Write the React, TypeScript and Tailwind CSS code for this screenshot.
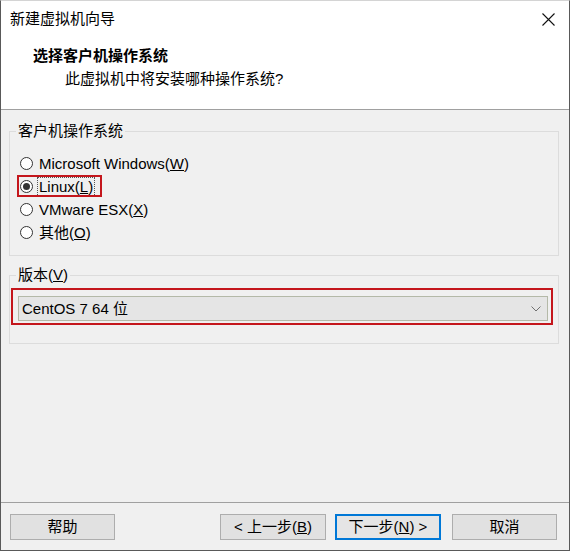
import React from "react";

function Radio({ checked, children, box }: { checked?: boolean; children: React.ReactNode; box?: boolean }) {
  return (
    <div className="relative flex h-[23px] items-center">
      <span className="flex h-[13px] w-[13px] items-center justify-center rounded-full border border-[#333333] bg-white">
        {checked && <span className="h-[7px] w-[7px] rounded-full bg-[#333333]" />}
      </span>
      <span className={"ml-[5px] px-[1px] leading-[18px] " + (box ? "outline outline-1 outline-dotted outline-[#555555]" : "")}>{children}</span>
      {box && <span className="pointer-events-none absolute left-[-3px] top-[0px] h-[22px] w-[85px] border-2 border-[#c4161c]" />}
    </div>
  );
}

function Btn({ children, def, w }: { children: React.ReactNode; def?: boolean; w: string }) {
  return (
    <div
      className={
        "flex h-[26px] items-center justify-center " +
        w +
        " " +
        (def ? "border-2 border-[#0078d7] bg-[#e5e5e5]" : "border border-[#adadad] bg-[#e1e1e1]")
      }
    >
      {children}
    </div>
  );
}

export default function App() {
  return (
    <div className="flex h-[551px] w-[570px] flex-col border-x border-b border-t border-x-[#595959] border-b-[#595959] border-t-[#d4d4d4] bg-[#f0f0f0] font-['Liberation_Sans','Noto_Sans_CJK_SC',sans-serif] text-[15px] leading-[20px] text-black">
      {/* title bar */}
      <div className="flex h-[36px] items-center justify-between bg-white pl-[9px] pr-[14px]">
        <span>新建虚拟机向导</span>
        <svg width="13" height="13" viewBox="0 0 13 13" className="mt-[1px]">
          <path d="M0.5 0.5 L12.5 12.5 M12.5 0.5 L0.5 12.5" stroke="#111" strokeWidth="1.1" fill="none" />
        </svg>
      </div>
      {/* header */}
      <div className="flex h-[72px] flex-col bg-white pl-[32px] pt-[9px]">
        <div className="font-bold">选择客户机操作系统</div>
        <div className="mt-[3px] pl-[32px]">此虚拟机中将安装哪种操作系统?</div>
      </div>
      <div className="h-px bg-[#a0a0a0]" />
      {/* body */}
      <div className="flex h-[392px] flex-col px-[8px]">
        <fieldset className="mt-[11px] h-[135px] w-[550px] border border-[#dcdcdc] p-0">
          <legend className="ml-[6px] px-[2px]">客户机操作系统</legend>
          <div className="mt-[11px] flex flex-col pl-[10px]">
            <Radio>
              Microsoft Windows(<u>W</u>)
            </Radio>
            <Radio checked box>
              Linux(<u>L</u>)
            </Radio>
            <Radio>
              VMware ESX(<u>X</u>)
            </Radio>
            <Radio>
              其他(<u>O</u>)
            </Radio>
          </div>
        </fieldset>
        <fieldset className="mt-[9px] h-[79px] w-[550px] border border-[#dcdcdc] p-0">
          <legend className="ml-[6px] px-[2px]">
            版本(<u>V</u>)
          </legend>
          <div className="ml-[1px] mt-[3px] h-[37px] w-[542px] border-2 border-[#c4161c] pb-[2px] pl-[5px] pr-[3px] pt-[6px]">
            <div className="flex h-[25px] items-center justify-between border border-[#b4b9a8] bg-[#e5e5e5] pl-[3px] pr-[6px]">
              <span>CentOS 7 64 位</span>
              <svg width="10" height="6" viewBox="0 0 10 6">
                <path d="M0.5 0.5 L5 5 L9.5 0.5" stroke="#707070" strokeWidth="1" fill="none" />
              </svg>
            </div>
          </div>
        </fieldset>
      </div>
      <div className="h-px bg-[#a0a0a0]" />
      {/* footer */}
      <div className="flex flex-1 items-start pl-[9px] pt-[11px]">
        <Btn w="w-[105px]">帮助</Btn>
        <div className="ml-[105px]">
          <Btn w="w-[106px]">
            &lt; 上一步(<u>B</u>)
          </Btn>
        </div>
        <div className="ml-[9px]">
          <Btn def w="w-[106px]">
            下一步(<u>N</u>) &gt;
          </Btn>
        </div>
        <div className="ml-[11px]">
          <Btn w="w-[105px]">取消</Btn>
        </div>
      </div>
    </div>
  );
}
